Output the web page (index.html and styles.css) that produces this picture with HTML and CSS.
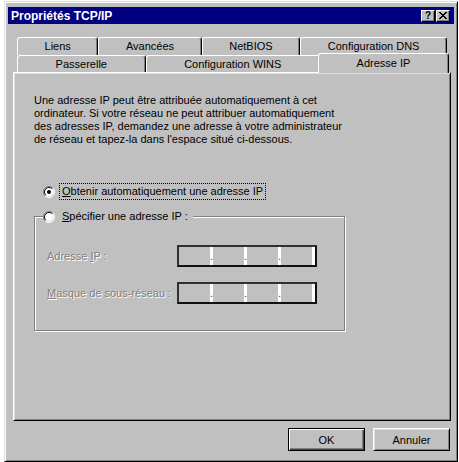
FILE: index.html
```html
<!DOCTYPE html>
<html>
<head>
    <title>Propriétés TCP/IP</title>
    <meta charset="UTF-8">
    <link rel="stylesheet" href="styles.css">
</head>
<body>
    <div class="window">
        <div class="titlebar">
            <span class="title">Propriétés TCP/IP</span>
            <div class="title-buttons">
                <span class="tbtn help">?</span>
                <span class="tbtn close">
                    <svg width="8" height="7" viewBox="0 0 8 7" shape-rendering="crispEdges">
                        <path d="M0 0h2v1h-2zM6 0h2v1h-2zM1 1h2v1h-2zM5 1h2v1h-2zM2 2h4v1h-4zM3 3h2v1h-2zM2 4h4v1h-4zM1 5h2v1h-2zM5 5h2v1h-2zM0 6h2v1h-2zM6 6h2v1h-2z" fill="#000"/>
                    </svg>
                </span>
            </div>
        </div>

        <div class="tabs">
            <div class="tab-row">
                <div class="tab">Liens</div>
                <div class="tab">Avancées</div>
                <div class="tab">NetBIOS</div>
                <div class="tab">Configuration DNS</div>
            </div>
            <div class="tab-row">
                <div class="tab">Passerelle</div>
                <div class="tab">Configuration WINS</div>
                <div class="tab active">Adresse IP</div>
            </div>
        </div>

        <div class="panel">
            <p class="intro">Une adresse IP peut être attribuée automatiquement à cet<br>ordinateur. Si votre réseau ne peut attribuer automatiquement<br>des adresses IP, demandez une adresse à votre administrateur<br>de réseau et tapez-la dans l'espace situé ci-dessous.</p>

            <div class="option first">
                <span class="radio">
                    <svg width="12" height="12" viewBox="0 0 12 12">
                        <circle cx="6" cy="6" r="5" fill="#fff"/>
                        <path d="M2.1 9.9A5.5 5.5 0 0 1 9.9 2.1" fill="none" stroke="#808080"/>
                        <path d="M9.9 2.1A5.5 5.5 0 0 1 2.1 9.9" fill="none" stroke="#fff"/>
                        <path d="M2.8 9.2A4.5 4.5 0 0 1 9.2 2.8" fill="none" stroke="#000"/>
                        <path d="M9.2 2.8A4.5 4.5 0 0 1 2.8 9.2" fill="none" stroke="#dfdfdf"/>
                        <circle cx="6" cy="6" r="2" fill="#000"/>
                    </svg>
                </span>
                <span class="option-label focus"><u>O</u>btenir automatiquement une adresse IP</span>
            </div>

            <div class="group">
                <div class="option group-title">
                    <span class="radio">
                        <svg width="12" height="12" viewBox="0 0 12 12">
                            <circle cx="6" cy="6" r="5" fill="#fff"/>
                            <path d="M2.1 9.9A5.5 5.5 0 0 1 9.9 2.1" fill="none" stroke="#808080"/>
                            <path d="M9.9 2.1A5.5 5.5 0 0 1 2.1 9.9" fill="none" stroke="#fff"/>
                            <path d="M2.8 9.2A4.5 4.5 0 0 1 9.2 2.8" fill="none" stroke="#000"/>
                            <path d="M9.2 2.8A4.5 4.5 0 0 1 2.8 9.2" fill="none" stroke="#dfdfdf"/>
                        </svg>
                    </span>
                    <span class="option-label"><u>S</u>pécifier une adresse IP :</span>
                </div>

                <div class="field-row">
                    <span class="field-label">Adresse <u>I</u>P :</span>
                    <div class="ip-field">
                        <span class="octet"></span>
                        <span class="octet"></span>
                        <span class="octet"></span>
                        <span class="octet"></span>
                    </div>
                </div>
                <div class="field-row">
                    <span class="field-label"><u>M</u>asque de sous-réseau :</span>
                    <div class="ip-field">
                        <span class="octet"></span>
                        <span class="octet"></span>
                        <span class="octet"></span>
                        <span class="octet"></span>
                    </div>
                </div>
            </div>
        </div>

        <div class="footer">
            <button class="btn default">OK</button>
            <button class="btn">Annuler</button>
        </div>
    </div>
</body>
</html>
```

FILE: styles.css
```css
body { margin: 0; background: #fff; font-family: "Liberation Sans", Arial, sans-serif; font-size: 11px; color: #000; }

.window { box-sizing: border-box; width: 454px; height: 461px; margin: 1px 0 0 4px; padding: 5px 3px 0 3px; background: #c0c0c0; border: 1px solid; border-color: #dfdfdf #000 #000 #dfdfdf; box-shadow: inset 1px 1px #fff, inset -1px -1px #808080; }

/* barre de titre */
.titlebar { height: 17px; background: #000080; display: flex; align-items: center; justify-content: space-between; padding: 0 4px 0 3px; }
.title { color: #fff; font-weight: bold; font-size: 12px; }
.title-buttons { display: flex; gap: 1px; }
.tbtn { box-sizing: border-box; width: 14px; height: 12px; background: #c0c0c0; border: 1px solid; border-color: #fff #000 #000 #fff; box-shadow: inset -1px -1px #808080; display: flex; align-items: center; justify-content: center; font-weight: bold; font-size: 10px; line-height: 1; }

/* onglets */
.tabs { margin: 13px 7px 0 9px; }
.tab-row { display: flex; height: 18px; }
.tab-row + .tab-row { height: 17px; }
.tab { flex: 1 1 auto; text-align: center; white-space: nowrap; line-height: 16px; border: 1px solid; border-bottom: none; border-color: #fff #000 #000 #fff; border-radius: 3px 3px 0 0; box-shadow: inset -1px 0 #808080; }
.tab.active { position: relative; z-index: 1; margin: -2px -2px -1px; padding-top: 1px; background: #c0c0c0; }

/* panneau */
.panel { box-sizing: border-box; height: 349px; margin: 0 3px 0 5px; padding: 21px 0 0 20px; border: 1px solid; border-color: #fff #000 #000 #fff; box-shadow: inset 1px 1px #dfdfdf, inset -1px -1px #808080; }
.intro { margin: 0; line-height: 13px; }

.option { display: flex; align-items: center; }
.option.first { margin: 37px 0 0 9px; }
.radio { width: 12px; height: 12px; margin-right: 4px; }
.radio svg { display: block; }
.option-label { padding: 1px 2px; border: 1px dotted transparent; line-height: 13px; white-space: nowrap; }
.option-label.focus { border-color: #000; }

.group { box-sizing: border-box; width: 311px; height: 115px; margin-top: 16px; border: 1px solid #808080; box-shadow: inset 1px 1px #fff, 1px 1px #fff; }
.group-title { width: fit-content; margin: -9px 0 0 8px; padding-right: 2px; background: #c0c0c0; }

.field-row { display: flex; align-items: center; margin: 20px 0 0 12px; }
.field-row + .field-row { margin-top: 15px; }
.field-label { width: 130px; color: #808080; text-shadow: 1px 1px #fff; white-space: nowrap; }
.ip-field { box-sizing: border-box; width: 140px; height: 22px; display: flex; border: 2px solid; border-color: #303030 #101010 #101010 #303030; }
.octet { flex: 1; display: flex; justify-content: flex-end; }
.octet::after { content: "."; width: 3px; background: #fff; color: #404040; line-height: 18px; text-align: center; overflow: hidden; }
.octet:last-child::after { content: ""; }

/* boutons */
.footer { display: flex; justify-content: flex-end; gap: 8px; margin-top: 7px; padding-right: 4px; }
.btn { box-sizing: border-box; width: 77px; height: 23px; padding: 0; font: inherit; color: #000; background: #c0c0c0; border: 1px solid; border-color: #fff #000 #000 #fff; box-shadow: inset 1px 1px #dfdfdf, inset -1px -1px #808080; }
.btn.default { border-color: #000; box-shadow: inset 1px 1px #fff, inset -1px -1px #404040, inset -2px -2px #808080; }
```
